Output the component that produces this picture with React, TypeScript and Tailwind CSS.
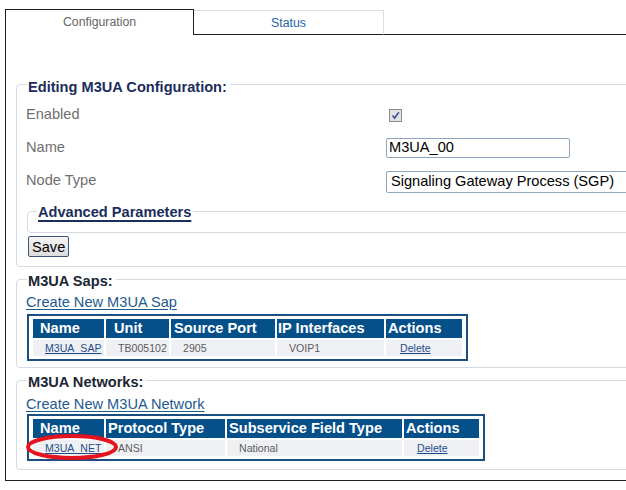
import React from "react";

type Col = { label: string; head: string; cell: string };
type Cell = { text: string; link?: boolean };

const sapCols: Col[] = [
  { label: "Name", head: "w-[71px] pl-[7px]", cell: "w-[71px] pl-[12px]" },
  { label: "Unit", head: "w-[63px] pl-[8px]", cell: "w-[63px] pl-[12px]" },
  { label: "Source Port", head: "w-[104px] pl-[3px]", cell: "w-[104px] pl-[12px]" },
  { label: "IP Interfaces", head: "w-[107px] pl-[1px]", cell: "w-[107px] pl-[12px]" },
  { label: "Actions", head: "w-[76px] pl-[2px]", cell: "w-[76px] pl-[14px]" },
];

const sapRow: Cell[] = [
  { text: "M3UA_SAP", link: true },
  { text: "TB005102" },
  { text: "2905" },
  { text: "VOIP1" },
  { text: "Delete", link: true },
];

const netCols: Col[] = [
  { label: "Name", head: "w-[71px] pl-[7px]", cell: "w-[71px] pl-[12px]" },
  { label: "Protocol Type", head: "w-[119px] pl-[2px]", cell: "w-[119px] pl-[12px]" },
  { label: "Subservice Field Type", head: "w-[175px] pl-[2px]", cell: "w-[175px] pl-[12px]" },
  { label: "Actions", head: "w-[75px] pl-[2px]", cell: "w-[75px] pl-[13px]" },
];

const netRow: Cell[] = [
  { text: "M3UA_NET", link: true },
  { text: "ANSI" },
  { text: "National" },
  { text: "Delete", link: true },
];

function DataTable({ cols, row }: { cols: Col[]; row: Cell[] }) {
  return (
    <div className="w-fit border-2 border-[#1b4f82] px-[4px] py-[3px]">
      <div className="flex h-[19px] gap-[2px]">
        {cols.map((c) => (
          <div key={c.label} className={`${c.head} bg-[#06508a] text-[14.6px] font-bold leading-[19px] text-white`}>
            {c.label}
          </div>
        ))}
      </div>
      <div className="mt-[2px] flex h-[16px] gap-[2px]">
        {row.map((cell, i) => (
          <div key={i} className={`${cols[i].cell} bg-[#eff0f4] text-[10.6px] leading-[17px]`}>
            {cell.link ? (
              <a className="text-[#1f4d8a] underline underline-offset-[1px]">{cell.text}</a>
            ) : (
              <span className="text-[#5c5c5c]">{cell.text}</span>
            )}
          </div>
        ))}
      </div>
    </div>
  );
}

function Fieldset({
  legend,
  legendClass,
  className,
  children,
}: {
  legend: React.ReactNode;
  legendClass: string;
  className: string;
  children: React.ReactNode;
}) {
  return (
    <div className={`rounded-[4px] border border-[#d4dbe4] ${className}`}>
      <div className={`w-fit bg-white text-[14.6px] font-bold leading-[17px] ${legendClass}`}>{legend}</div>
      {children}
    </div>
  );
}

function Row({ label, children }: { label: string; children: React.ReactNode }) {
  return (
    <div className="flex h-[33px] items-center">
      <div className="w-[360px] text-[14.6px] leading-[17px] text-[#6f6f6f]">{label}</div>
      {children}
    </div>
  );
}

export default function App() {
  return (
    <div className="relative h-[490px] w-[626px] overflow-hidden bg-white font-['Liberation_Sans',Arial,sans-serif]">
      <div className="w-[700px] pl-[5px] pt-[9px]">
        {/* tabs */}
        <div className="flex items-end">
          <div className="h-[26px] w-[189px] border-x border-t border-[#1e1e1e] pt-[5px] text-center text-[12.3px] leading-[14px] text-[#666]">
            Configuration
          </div>
          <div className="h-[25px] w-[190px] border-r border-t border-b border-r-[#dcdfe8] border-t-[#dcdfe8] border-b-[#1e1e1e] pt-[5px] text-center text-[12.3px] leading-[14px] text-[#1f62a6]">
            Status
          </div>
          <div className="flex-1 border-b border-[#1e1e1e]" />
        </div>

        {/* panel */}
        <div className="h-[446px] border-b border-l border-[#1e1e1e] pt-[49px]">
          <Fieldset
            legend="Editing M3UA Configuration:"
            legendClass="-mt-[6px] ml-[1px] pl-[1px] pr-[3px] text-[#1c2d5c]"
            className="ml-[10px] pb-[7px] pl-[9px]"
          >
            <div className="mt-[2px]">
              <Row label="Enabled">
                <span className="ml-[3px] mt-[2px] flex h-[13px] w-[13px] items-center justify-center border border-[#8d8d8d] bg-[#e3e3e3]">
                  <svg width="9" height="9" viewBox="0 0 9 9">
                    <path d="M1.5 4.5 L3.6 7 L7.8 1.2" stroke="#4257a0" strokeWidth="1.7" fill="none" />
                  </svg>
                </span>
              </Row>
              <Row label="Name">
                <input
                  readOnly
                  value="M3UA_00"
                  className="h-[20px] w-[184px] rounded-[2px] border border-[#8ea6c2] px-[2px] text-[14.6px] text-black outline-none"
                />
              </Row>
              <Row label="Node Type">
                <div className="mt-[2px] flex h-[22px] w-[270px] items-center rounded-[2px] border border-[#8ea6c2] pl-[4px] text-[14.6px] text-black">
                  Signaling Gateway Process (SGP)
                </div>
              </Row>
            </div>

            <Fieldset
              legend="Advanced Parameters"
              legendClass="-mt-[8px] ml-[9px] pl-[1px] pr-[2px] text-[#1c2d5c] underline decoration-2 underline-offset-[3px]"
              className="ml-[1px] mt-[14px] pb-[11px]"
            >
              {null}
            </Fieldset>

            <button className="ml-[2px] mt-[3px] h-[21px] rounded-[2px] border border-[#3b5776] bg-gradient-to-b from-[#f5f5f5] to-[#dcdcdc] px-[3px] text-[14.6px] leading-[18px] text-black">
              Save
            </button>
          </Fieldset>

          <Fieldset
            legend="M3UA Saps:"
            legendClass="-mt-[7px] ml-[1px] pl-[1px] pr-[3px] text-[#202633]"
            className="ml-[10px] mt-[12px] pb-[6px] pl-[9px]"
          >
            <div className="mt-[4px] text-[14.6px] leading-[17px]">
              <a className="text-[#1f5a8c] underline underline-offset-[2px]">Create New M3UA Sap</a>
            </div>
            <div className="ml-[1px] mt-[3px]">
              <DataTable cols={sapCols} row={sapRow} />
            </div>
          </Fieldset>

          <Fieldset
            legend="M3UA Networks:"
            legendClass="-mt-[7px] ml-[1px] pl-[1px] pr-[3px] text-[#202633]"
            className="ml-[10px] mt-[12px] pb-[8px] pl-[9px]"
          >
            <div className="mt-[5px] text-[14.6px] leading-[17px]">
              <a className="text-[#1f5a8c] underline underline-offset-[2px]">Create New M3UA Network</a>
            </div>
            <div className="ml-[1px] mt-[1px]">
              <DataTable cols={netCols} row={netRow} />
            </div>
          </Fieldset>
        </div>
      </div>

      {/* red annotation circle */}
      <svg className="pointer-events-none absolute left-[24px] top-[433px]" width="96" height="28" viewBox="0 0 96 28">
        <ellipse cx="48" cy="14" rx="44" ry="11" stroke="#e3141e" strokeWidth="4" fill="none" />
      </svg>
    </div>
  );
}
